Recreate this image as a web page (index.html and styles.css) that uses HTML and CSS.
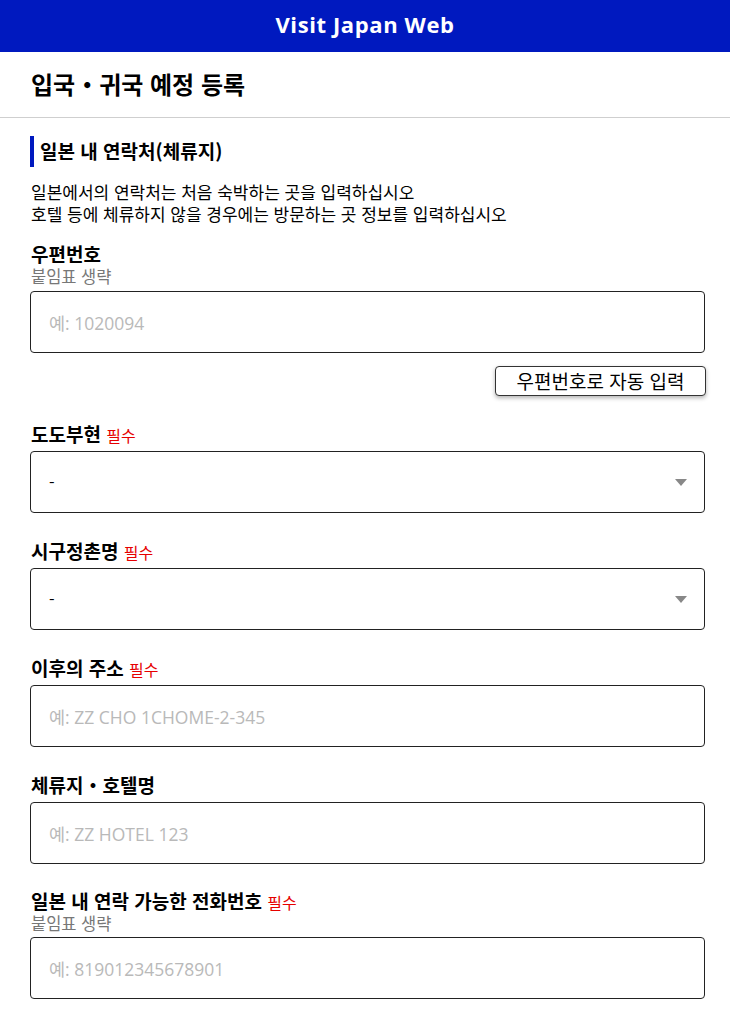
FILE: index.html
```html
<!DOCTYPE html>
<html lang="ko">
<head>
<meta charset="utf-8">
<title>Visit Japan Web</title>
<link rel="stylesheet" href="styles.css">
</head>
<body>
<header class="topbar">Visit Japan Web</header>
<div class="page-title">입국・귀국 예정 등록</div>
<main class="content">
  <h2 class="section-head">일본 내 연락처(체류지)</h2>
  <div class="desc">
    <div class="desc-line">일본에서의 연락처는 처음 숙박하는 곳을 입력하십시오</div>
    <div class="desc-line">호텔 등에 체류하지 않을 경우에는 방문하는 곳 정보를 입력하십시오</div>
  </div>

  <div class="field first">
    <div class="label">우편번호</div>
    <div class="hint">붙임표 생략</div>
    <div class="input"><span class="ph">예: 1020094</span></div>
    <div class="btn-row"><button class="btn">우편번호로 자동 입력</button></div>
  </div>

  <div class="field">
    <div class="label">도도부현 <span class="req">필수</span></div>
    <div class="input select"><span class="val">-</span><span class="arrow"></span></div>
  </div>

  <div class="field">
    <div class="label">시구정촌명 <span class="req">필수</span></div>
    <div class="input select"><span class="val">-</span><span class="arrow"></span></div>
  </div>

  <div class="field">
    <div class="label">이후의 주소 <span class="req">필수</span></div>
    <div class="input"><span class="ph">예: ZZ CHO 1CHOME-2-345</span></div>
  </div>

  <div class="field">
    <div class="label">체류지・호텔명</div>
    <div class="input"><span class="ph">예: ZZ HOTEL 123</span></div>
  </div>

  <div class="field last">
    <div class="label">일본 내 연락 가능한 전화번호 <span class="req">필수</span></div>
    <div class="hint">붙임표 생략</div>
    <div class="input"><span class="ph">예: 819012345678901</span></div>
  </div>
</main>
</body>
</html>
```
FILE: styles.css
```css
* { box-sizing: border-box; }
html, body { margin: 0; padding: 0; background: #fff; }
body {
  font-family: "Noto Sans CJK KR", "Noto Sans", sans-serif;
  color: #000;
}
.topbar {
  height: 52px;
  background: #0019bf;
  color: #fff;
  font-family: "Open Sans", "Noto Sans", sans-serif;
  font-weight: 700;
  font-size: 22px;
  display: flex;
  align-items: center;
  justify-content: center;
  letter-spacing: 0.6px;
  padding-bottom: 4px;
}
.page-title {
  height: 66px;
  padding-left: 31px;
  padding-bottom: 3px;
  display: flex;
  align-items: center;
  font-size: 24px;
  font-weight: 700;
  border-bottom: 1px solid #cfcfcf;
}
.content {
  padding: 18px 25px 0 30px;
}
.section-head {
  margin: 0;
  height: 31px;
  border-left: 4px solid #0019bf;
  padding-left: 6px;
  padding-bottom: 2px;
  font-size: 19px;
  font-weight: 700;
  display: flex;
  align-items: center;
}
.desc {
  margin: 15px 0 0 1px;
  font-size: 17px;
  font-family: "Liberation Sans", "Noto Sans CJK KR", sans-serif;
}
.desc-line {
  line-height: 22px;
  height: 22px;
  padding-top: 1px;
}
.field { margin-top: 28px; }
.field.first { margin-top: 18px; }
.field.last { margin-top: 27px; }
.label {
  font-family: "Liberation Sans", "Noto Sans CJK KR", sans-serif;
  font-size: 19px;
  font-weight: 700;
  line-height: 22px;
  height: 22px;
  padding-top: 1px;
  padding-left: 1px;
}
.req {
  color: #e60000;
  font-weight: 400;
  font-size: 16px;
  line-height: 1;
}
.hint {
  font-family: "Liberation Sans", "Noto Sans CJK KR", sans-serif;
  color: #777;
  font-size: 16.5px;
  line-height: 20px;
  height: 20px;
  padding-top: 1px;
  padding-left: 1px;
}
.input {
  margin-top: 5px;
  height: 62px;
  border: 1px solid #222;
  border-radius: 4px;
  display: flex;
  align-items: center;
  padding: 0 17px 0 18px;
  font-size: 17px;
}
.hint + .input { margin-top: 5px; }
.last .hint + .input { margin-top: 4px; }
.ph {
  color: #b9b9b9;
  font-family: "Open Sans", "Noto Sans CJK KR", sans-serif;
  font-size: 17.5px;
}
.select { justify-content: space-between; }
.val { font-size: 16px; }
.arrow {
  width: 0;
  height: 0;
  border-left: 6px solid transparent;
  border-right: 6px solid transparent;
  border-top: 7px solid #888;
}
.btn-row {
  display: flex;
  justify-content: flex-end;
  margin-top: 13px;
}
.btn {
  height: 30px;
  width: 211px;
  margin-right: -1px;
  background: #fff;
  border: 1px solid #333;
  border-radius: 4px;
  box-shadow: 0 2px 4px rgba(0,0,0,0.3);
  font-family: "Noto Sans CJK KR", sans-serif;
  font-size: 19px;
  color: #000;
  padding: 0 0 2px;
  line-height: 1;
}
```
